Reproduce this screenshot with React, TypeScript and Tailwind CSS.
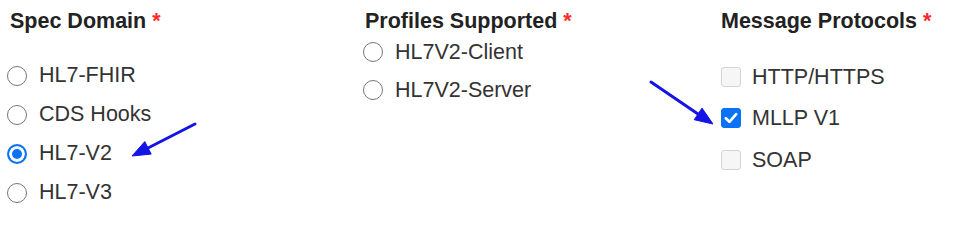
import type { ReactNode } from "react";

const specDomains = ["HL7-FHIR", "CDS Hooks", "HL7-V2", "HL7-V3"];
const profiles = ["HL7V2-Client", "HL7V2-Server"];
const protocols = [
  { label: "HTTP/HTTPS", checked: false },
  { label: "MLLP V1", checked: true },
  { label: "SOAP", checked: false },
];

function Heading({ children }: { children: ReactNode }) {
  return (
    <p className="ml-[3px] pt-[8px] text-[21.5px] font-bold leading-[26px] text-[#222]">
      {children} <span className="text-[#ff2a2a]">*</span>
    </p>
  );
}

function Radio({ label, checked, name }: { label: string; checked?: boolean; name: string }) {
  return (
    <label className="flex items-center gap-[12px]">
      <input
        type="radio"
        name={name}
        defaultChecked={checked}
        className="m-0 h-[20px] w-[20px] shrink-0 appearance-none rounded-full border-[1.6px] border-[#777] bg-white checked:border-2 checked:border-[#0b72f5] checked:bg-[#0b72f5] checked:shadow-[inset_0_0_0_3px_#fff]"
      />
      <span>{label}</span>
    </label>
  );
}

function Checkbox({ label, checked }: { label: string; checked?: boolean }) {
  return (
    <label className="flex h-[41.5px] items-center gap-[11px]">
      <span className="relative flex h-[20px] w-[20px] shrink-0">
        <input
          type="checkbox"
          defaultChecked={checked}
          className="m-0 h-[20px] w-[20px] appearance-none rounded-[3px] border border-[#d4d4d4] bg-[#f6f6f6] checked:border-[#0b72f5] checked:bg-[#0b72f5]"
        />
        {checked && (
          <svg className="pointer-events-none absolute left-0 top-0" width="20" height="20" viewBox="0 0 20 20">
            <path d="M4.8 10.3 L8.4 13.8 L15.2 6.2" fill="none" stroke="#fff" strokeWidth="2.7" strokeLinecap="round" strokeLinejoin="round" />
          </svg>
        )}
      </span>
      <span>{label}</span>
    </label>
  );
}

export default function App() {
  return (
    <div
      className="relative h-[231px] w-[975px] overflow-hidden bg-white pl-[7px] text-[21.5px] text-[#333]"
      style={{ fontFamily: '"Liberation Sans", Arial, sans-serif' }}
    >
      <div className="grid grid-cols-[355px_356px_1fr]">
        <div>
          <Heading>Spec Domain</Heading>
          <div className="mt-[22px] flex flex-col">
            {specDomains.map((item) => (
              <div key={item} className="flex h-[39px] items-center">
                <Radio name="spec" label={item} checked={item === "HL7-V2"} />
              </div>
            ))}
          </div>
        </div>

        <div>
          <Heading>Profiles Supported</Heading>
          <div className="ml-px flex flex-col gap-[2px]">
            {profiles.map((item) => (
              <div key={item} className="flex h-[36px] items-center">
                <Radio name="profile" label={item} />
              </div>
            ))}
          </div>
        </div>

        <div>
          <Heading>Message Protocols</Heading>
          <div className="ml-[3px] mt-[22px] flex flex-col">
            {protocols.map((item) => (
              <Checkbox key={item.label} label={item.label} checked={item.checked} />
            ))}
          </div>
        </div>
      </div>

      {/* annotation arrows */}
      <svg className="pointer-events-none absolute left-0 top-0" width="975" height="231">
        <g fill="#1414e6" stroke="#1414e6">
          <line x1="195" y1="124" x2="148" y2="148" strokeWidth="3" strokeLinecap="round" />
          <polygon points="132,156 151.2,154.1 144.8,141.6" strokeWidth="1" strokeLinejoin="round" />
          <line x1="651" y1="82" x2="698" y2="114" strokeWidth="3" strokeLinecap="round" />
          <polygon points="713,124 694.2,119.7 702,108.1" strokeWidth="1" strokeLinejoin="round" />
        </g>
      </svg>
    </div>
  );
}
